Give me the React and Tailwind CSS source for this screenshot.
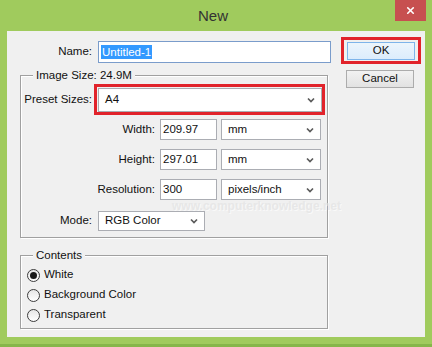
import { X } from "lucide-react";

const Chevron = () => (
  <svg width="8" height="6" viewBox="0 0 8 6">
    <path d="M1 1.5l3 3 3-3" stroke="#5a5a5a" strokeWidth="1.7" fill="none" />
  </svg>
);

const Select = ({ value, className = "" }) => (
  <div
    className={`flex items-center justify-between border border-[#abadb3] bg-white pl-[6px] pr-[6px] ${className}`}
  >
    <span>{value}</span>
    <Chevron />
  </div>
);

const Field = ({ value, className = "" }) => (
  <div className={`flex items-center border border-[#abadb3] bg-white pl-[2px] ${className}`}>
    {value}
  </div>
);

const Group = ({ title, className = "", children }) => (
  <div
    className={`ml-[13px] w-[308px] border border-[#a0a0a0] shadow-[1px_1px_0_#fff,inset_1px_1px_0_#fff] ${className}`}
  >
    <div className="-mt-[7px] ml-[12px] flex h-[14px] w-fit items-center bg-[#f0f0f0] px-[3px]">
      {title}
    </div>
    {children}
  </div>
);

const Radio = ({ label, checked }) => (
  <div className="flex h-[20px] items-center pl-[6px]">
    <div className="flex size-[13px] items-center justify-center rounded-full border border-[#3c3c3c] bg-gradient-to-b from-[#e6e6e6] to-white">
      {checked && <div className="size-[7px] rounded-full bg-[#1a1a1a]" />}
    </div>
    <span className="ml-[4px]">{label}</span>
  </div>
);

const SizeRow = ({ label, value, unit, className = "" }) => (
  <div className={`flex items-center ${className}`}>
    <div className="w-[134px] text-right">{label}</div>
    <Field value={value} className="ml-[5px] h-[21px] w-[57px]" />
    <Select value={unit} className="ml-[4px] h-[21px] w-[100px]" />
  </div>
);

export default function App() {
  return (
    <div className="relative flex h-[347px] w-[432px] flex-col bg-[#a0cb5d] font-['Liberation_Sans',Arial,sans-serif] text-[11.5px] text-[#111]">
      <div className="flex h-[31px] items-start">
        <div className="flex h-[31px] flex-1 items-center justify-center pl-[31px] pt-[2px] text-[15px] text-[#333]">
          New
        </div>
        <div className="mr-[6px] flex h-[21px] w-[31px] items-center justify-center bg-[#c75050]">
          <X size={11} strokeWidth={3.5} color="white" />
        </div>
      </div>

      <div className="mx-[7px] flex h-[306px] bg-[#f0f0f0]">
        <div className="w-[334px] pt-[10px]">
          <div className="flex items-center">
            <div className="w-[85px] text-right">Name:</div>
            <div className="ml-[6px] flex h-[22px] w-[233px] items-center border border-[#7a9ccb] bg-white pl-[2px]">
              <span className="bg-[#3399ff] px-[1px] leading-[14px] text-white">Untitled-1</span>
            </div>
          </div>

          <Group title="Image Size: 24.9M" className="mt-[12px] pb-[6px]">
            <div className="mt-[1px] flex items-center">
              <div className="w-[71px] text-right">Preset Sizes:</div>
              <div className="ml-[2px] flex h-[31px] w-[231px] items-center border-[3px] border-[#e1232b] pl-[1px]">
                <Select value="A4" className="h-[24px] w-[224px]" />
              </div>
            </div>
            <SizeRow label="Width:" value="209.97" unit="mm" className="mt-[4px]" />
            <SizeRow label="Height:" value="297.01" unit="mm" className="mt-[9px]" />
            <SizeRow label="Resolution:" value="300" unit="pixels/inch" className="mt-[9px]" />
            <div className="mt-[11px] flex items-center">
              <div className="w-[71px] text-right">Mode:</div>
              <Select value="RGB Color" className="ml-[6px] h-[20px] w-[107px]" />
            </div>
          </Group>

          <Group title="Contents" className="mt-[17px] pb-[3px]">
            <div className="mt-[2px]">
              <Radio label="White" checked />
              <Radio label="Background Color" />
              <Radio label="Transparent" />
            </div>
          </Group>
        </div>

        <div className="flex flex-col items-start pt-[6px]">
          <div className="flex h-[27px] w-[80px] items-center justify-center border-[3px] border-[#e1232b]">
            <div className="flex h-[18px] w-[68px] items-center justify-center border border-[#7eb4ea] bg-gradient-to-b from-[#ecf5fc] to-[#dcecfc]">
              OK
            </div>
          </div>
          <div className="ml-[5px] mt-[6px] flex h-[18px] w-[68px] items-center justify-center border border-[#acacac] bg-gradient-to-b from-[#f2f2f2] to-[#e2e2e2]">
            Cancel
          </div>
        </div>
      </div>

      <div className="mt-auto h-[3px] bg-[#86b64a]" />

      <div className="pointer-events-none absolute left-[172px] top-[197px] text-[12px] font-bold text-[#e2e2e2] opacity-60 [text-shadow:1px_1px_0_#fff]">
        www.computerknowledge.net
      </div>
    </div>
  );
}
